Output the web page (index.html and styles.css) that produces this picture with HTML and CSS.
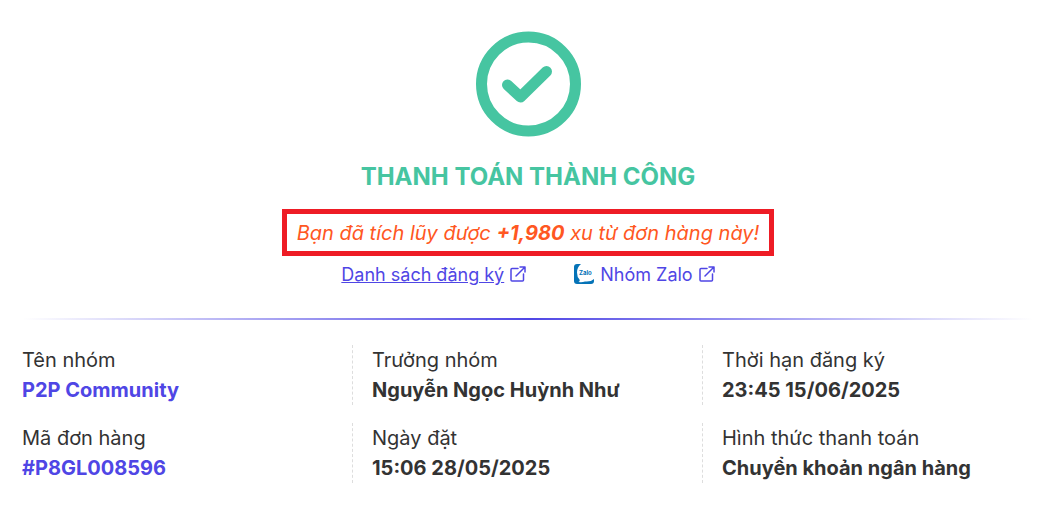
FILE: index.html
```html
<!DOCTYPE html>
<html lang="vi">
<head>
  <meta charset="UTF-8" />
  <meta name="viewport" content="width=device-width, initial-scale=1.0"/>
  <title>Thanh toán thành công</title>
  <link rel="stylesheet" href="styles.css">
</head>
<body>

  <main class="receipt">
    <section class="result">
      <svg class="success-icon" viewBox="0 0 106 106" aria-hidden="true">
        <circle cx="53.5" cy="53" r="47" fill="none" stroke="currentColor" stroke-width="11"/>
        <path d="M32.500 54L45.500 66L71.500 40.500" fill="none" stroke="currentColor" stroke-width="11" stroke-linecap="round" stroke-linejoin="round"/>
      </svg>
      <h1>THANH TOÁN THÀNH CÔNG</h1>
      <p class="coins">Bạn đã tích lũy được <strong>+1,980</strong> xu từ đơn hàng này!</p>

      <div class="links">
        <a class="link underlined" href="#">
          <span>Danh sách đăng ký</span>
          <svg class="external" viewBox="0 0 16 16" aria-hidden="true">
            <path d="M8 2.500H2a1 1 0 0 0-1 1V14a1 1 0 0 0 1 1H12.500a1 1 0 0 0 1-1V8M10 1H15V6M15 1L6 10"/>
          </svg>
        </a>
        <a class="link" href="#">
          <svg class="zalo" viewBox="0 0 20 20" aria-hidden="true">
            <rect width="20" height="20" rx="3" fill="#0573b7"/>
            <path d="M7 0H20V15Q17 18 11 17.500Q8 18.500 4.500 18Q6.500 17 5.500 15.500Q3 13 3 8.500Q3 3 7 0Z" fill="#fff"/>
            <text x="5" y="10.500">Zalo</text>
          </svg>
          <span>Nhóm Zalo</span>
          <svg class="external" viewBox="0 0 16 16" aria-hidden="true">
            <path d="M8 2.500H2a1 1 0 0 0-1 1V14a1 1 0 0 0 1 1H12.500a1 1 0 0 0 1-1V8M10 1H15V6M15 1L6 10"/>
          </svg>
        </a>
      </div>
    </section>

    <hr class="divider">

    <dl class="details">
      <div class="item">
        <dt>Tên nhóm</dt>
        <dd class="accent">P2P Community</dd>
      </div>
      <div class="item">
        <dt>Trưởng nhóm</dt>
        <dd>Nguyễn Ngọc Huỳnh Như</dd>
      </div>
      <div class="item">
        <dt>Thời hạn đăng ký</dt>
        <dd>23:45 15/06/2025</dd>
      </div>
      <div class="item">
        <dt>Mã đơn hàng</dt>
        <dd class="accent">#P8GL008596</dd>
      </div>
      <div class="item">
        <dt>Ngày đặt</dt>
        <dd>15:06 28/05/2025</dd>
      </div>
      <div class="item">
        <dt>Hình thức thanh toán</dt>
        <dd>Chuyển khoản ngân hàng</dd>
      </div>
    </dl>
  </main>

</body>
</html>
```

FILE: styles.css
```css
* {
  box-sizing: border-box;
}

body {
  margin: 0;
  font-family: Inter, 'Noto Sans', sans-serif;
  font-size: 20px;
  line-height: 30px;
  background: white;
  color: #333;
}

.receipt {
  padding: 31px 3px 20px;
}

.result {
  display: flex;
  flex-direction: column;
  align-items: center;
}

.success-icon {
  width: 106px;
  height: 106px;
  color: #46c5a1;
}

h1 {
  margin: 24px 0 17px;
  font-size: 24px;
  line-height: 31px;
  font-weight: 700;
  color: #46c5a1;
}

.coins {
  margin: 0;
  padding: 4px 10px 3px;
  border: 5px solid #ee1c25;
  font-style: italic;
  color: #ff5722;
}

.links {
  display: flex;
  gap: 48px;
  margin-top: 4px;
  font-size: 18px;
}

.link {
  display: flex;
  align-items: center;
  gap: 6px;
  color: #4f46e5;
  text-decoration: none;
}

.underlined span {
  text-decoration: underline;
}

.external {
  width: 16px;
  height: 16px;
  margin-bottom: 2px;
  fill: none;
  stroke: currentColor;
  stroke-width: 1.5;
  stroke-linecap: round;
  stroke-linejoin: round;
}

.zalo {
  width: 20px;
  height: 20px;
  margin-bottom: 2px;
}

.zalo text {
  font-size: 6px;
  font-weight: 700;
  fill: #0573b7;
}

.divider {
  height: 2px;
  margin: 28px 20px 25px;
  border: none;
  background: linear-gradient(to right, transparent, #4f46e5, transparent);
}

.details {
  display: grid;
  grid-template-columns: repeat(3, 1fr);
  row-gap: 18px;
  margin: 0;
}

.item {
  padding: 0 19px;
  border-right: 1px dashed #ddd;
}

.item:nth-child(3n) {
  border-right: none;
}

dd {
  margin: 0;
  font-weight: 700;
}

.accent {
  color: #4f46e5;
}
```
